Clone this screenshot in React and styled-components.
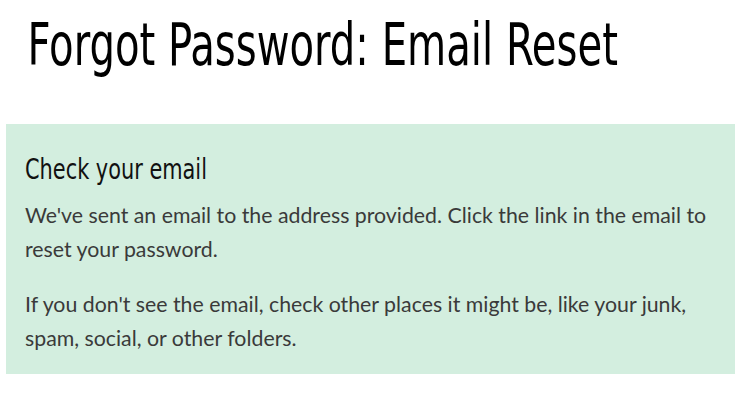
import React from 'react';
import styled, { createGlobalStyle } from 'styled-components';

const GlobalStyle = createGlobalStyle`
  html, body {
    margin: 0;
    padding: 0;
    background: #ffffff;
  }
`;

const Page = styled.div`
  padding: 0 18px 0 6px;
`;

const Title = styled.h1`
  margin: 0;
  padding: 12px 0 0 28px;
  height: 110px;
  box-sizing: border-box;
  font-family: "DejaVu Sans Condensed", "DejaVu Sans", sans-serif;
  font-weight: 400;
  font-size: 58px;
  line-height: 66px;
  color: #000;
  transform: scaleX(0.77);
  transform-origin: left top;
  white-space: nowrap;
`;

const Notice = styled.section`
  margin-top: 14px;
  background: #d3eedf;
  padding: 28px 19px 19px;
`;

const NoticeTitle = styled.h2`
  margin: 0 0 12px;
  font-family: "DejaVu Sans Condensed", "DejaVu Sans", sans-serif;
  font-weight: 400;
  font-size: 29px;
  line-height: 34px;
  color: #111;
  transform: scaleX(0.8);
  transform-origin: left top;
  white-space: nowrap;
`;

const Text = styled.p`
  margin: ${(p) => (p.$last ? '0' : '0 0 21px')};
  font-family: "Lato", "Noto Sans", sans-serif;
  font-size: 21.3px;
  line-height: 34px;
  color: #3a3a3a;
`;

export default function App() {
  return (
    <Page>
      <GlobalStyle />
      <Title>Forgot Password: Email Reset</Title>
      <Notice>
        <NoticeTitle>Check your email</NoticeTitle>
        <Text>
          We've sent an email to the address provided. Click the link in the email to reset your password.
        </Text>
        <Text $last>
          If you don't see the email, check other places it might be, like your junk, spam, social, or other folders.
        </Text>
      </Notice>
    </Page>
  );
}
